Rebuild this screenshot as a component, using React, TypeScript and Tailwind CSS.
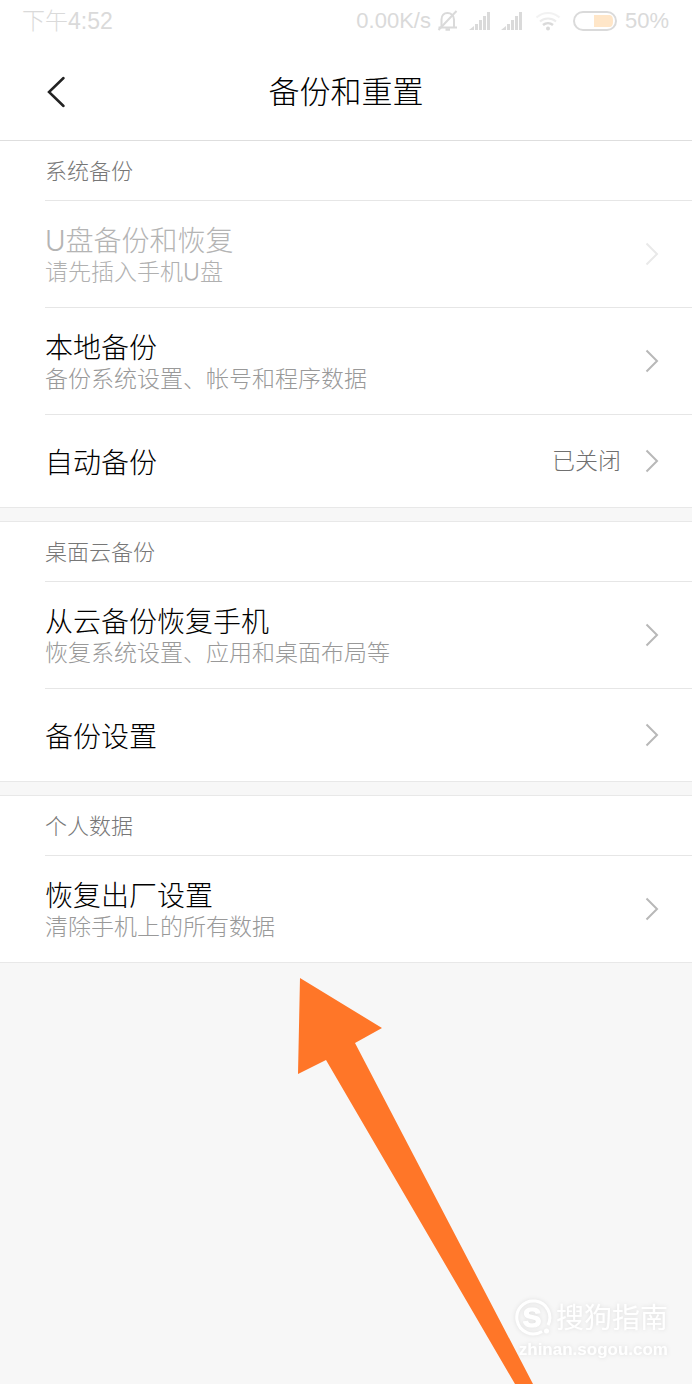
type Item = {
  title: string;
  summary?: string;
  value?: string;
  disabled?: boolean;
};

type Section = {
  label: string;
  items: Item[];
};

const sections: Section[] = [
  {
    label: "系统备份",
    items: [
      { title: "U盘备份和恢复", summary: "请先插入手机U盘", disabled: true },
      { title: "本地备份", summary: "备份系统设置、帐号和程序数据" },
      { title: "自动备份", value: "已关闭" },
    ],
  },
  {
    label: "桌面云备份",
    items: [
      { title: "从云备份恢复手机", summary: "恢复系统设置、应用和桌面布局等" },
      { title: "备份设置" },
    ],
  },
  {
    label: "个人数据",
    items: [{ title: "恢复出厂设置", summary: "清除手机上的所有数据" }],
  },
];

const BellOff = () => (
  <svg viewBox="0 0 22 22" className="h-[22px] w-[22px]" fill="none" stroke="currentColor" strokeWidth="2">
    <path d="M1.500 17.500h18.500M4.500 17.500V9.500c0-4 2.500-6.500 6-6.500s6.500 2.500 6.500 6.500v8" />
    <path d="M19.500 1 1.500 20" />
    <path d="M8.500 19.500h4.500" strokeWidth="2.500" />
  </svg>
);

const Signal = () => (
  <svg viewBox="0 0 22 20" className="h-5 w-[22px]" fill="currentColor">
    <path d="M0 19l5-4v4z" />
    <path d="M6 13h3v6H6zM10 9h3v10h-3zM14 5h3v14h-3zM18 1h3v18h-3z" />
  </svg>
);

const Wifi = () => (
  <svg viewBox="0 0 26 20" className="h-5 w-[26px]" fill="none" stroke="currentColor">
    <path d="M1.500 6.500c6.500-6 16.500-6 23 0" strokeWidth="2" opacity="0.350" />
    <path d="M5 10.500c4.500-4 11.500-4 16 0" strokeWidth="2" opacity="0.500" />
    <path d="M8 14c3-2.500 7-2.500 10 0" strokeWidth="2.500" />
    <circle cx="13" cy="17.500" r="2" fill="currentColor" stroke="none" />
  </svg>
);

const Battery = () => (
  <svg viewBox="0 0 44 20" className="h-5 w-11" fill="none">
    <rect x="1" y="1" width="42" height="18" rx="9" stroke="currentColor" strokeWidth="2" />
    <path d="M21 4h15c3 0 4 2 4 6s-1 6-4 6H21z" fill="#ffe6c8" />
  </svg>
);

const StatusBar = () => (
  <div className="flex h-10 items-center justify-between pt-0.5 pr-[23px] pl-[22px] font-['Liberation_Sans','Noto_Sans_CJK_SC',sans-serif] text-[23px] leading-none text-[#dadada]">
    <span>下午4:52</span>
    <div className="flex items-center text-[22px]">
      <span className="mr-1.5">0.00K/s</span>
      <BellOff />
      <span className="ml-2.5 flex gap-2.5">
        <Signal />
        <Signal />
      </span>
      <span className="mr-3 ml-3">
        <Wifi />
      </span>
      <Battery />
      <span className="ml-2">50%</span>
    </div>
  </div>
);

const Chevron = () => (
  <svg viewBox="0 0 14 24" className="h-6 w-3.5 shrink-0" fill="none" stroke="currentColor" strokeWidth="2">
    <path d="M1.500 1.500 12 12 1.500 22.500" />
  </svg>
);

const Row = ({ item }: { item: Item }) => (
  <button
    type="button"
    disabled={item.disabled}
    className={`flex w-full items-center border-t border-[#e6e6e6] pr-[33px] text-left ${
      item.summary ? "h-[107px]" : "h-[93px]"
    }`}
  >
    <span className="flex min-w-0 flex-1 flex-col pt-1">
      <span className={`text-[28px] leading-8 ${item.disabled ? "text-[#b4b4b4]" : "text-black"}`}>
        {item.title}
      </span>
      {item.summary && (
        <span className={`text-[23px] leading-[30px] ${item.disabled ? "text-[#b0b0b0]" : "text-[#999999]"}`}>
          {item.summary}
        </span>
      )}
    </span>
    {item.value && <span className="mr-6 text-[23px] leading-8 text-[#707070]">{item.value}</span>}
    <span className={item.disabled ? "text-[#e9e9e9]" : "text-[#b8b8b8]"}>
      <Chevron />
    </span>
  </button>
);

const Watermark = () => (
  <div className="relative flex flex-col items-end text-white drop-shadow-[0_0_2px_rgba(0,0,0,0.1)]">
    <div className="flex items-center gap-1">
      <svg viewBox="0 0 38 38" className="h-[38px] w-[38px]" fill="none" stroke="currentColor">
        <path d="M28 32.500A16.500 16.500 0 1 1 34 26" strokeWidth="3" />
        <circle cx="32.500" cy="32" r="2.500" fill="currentColor" stroke="none" />
        <text
          x="18"
          y="28"
          textAnchor="middle"
          className="font-['Liberation_Sans',sans-serif] text-[28px] font-bold"
          fill="currentColor"
          strokeWidth="1"
        >
          S
        </text>
      </svg>
      <span className="text-[28px] leading-10 font-normal">搜狗指南</span>
    </div>
    <span className="font-['Liberation_Sans',sans-serif] text-[17px] leading-6 font-bold">
      zhinan.sogou.com
    </span>
  </div>
);

export default function App() {
  return (
    <div className="flex min-h-screen flex-col bg-[#f7f7f7] font-['Inter','Noto_Sans_CJK_SC',sans-serif] font-light">
      <header className="border-b border-[#dedede] bg-white">
        <StatusBar />
        <div className="grid h-[100px] grid-cols-[1fr_auto_1fr] items-center pt-1 pl-[46px]">
          <button type="button" aria-label="返回" className="w-5 text-[#222222]">
            <svg viewBox="0 0 20 32" className="h-8 w-5" fill="none" stroke="currentColor" strokeWidth="2.500">
              <path d="M17.500 2 3 16l14.500 14" strokeLinecap="round" />
            </svg>
          </button>
          <h1 className="-ml-[46px] text-[31px] leading-10 text-black">备份和重置</h1>
        </div>
      </header>

      <main className="flex flex-col gap-[13px]">
        {sections.map((section, i) => (
          <section
            key={section.label}
            className={`border-b border-[#e8e8e8] bg-white pl-[45px] ${i > 0 ? "border-t" : ""}`}
          >
            <h2 className="flex h-[59px] items-center text-[22px] leading-8 text-[#777777]">
              {section.label}
            </h2>
            {section.items.map((item) => (
              <Row key={item.title} item={item} />
            ))}
          </section>
        ))}
      </main>

      <div className="relative flex min-h-[420px] flex-1 flex-col items-end justify-end overflow-hidden pr-6 pb-[22px]">
        <svg viewBox="0 0 240 406" className="absolute top-[15px] left-[298px] h-[406px] w-60" fill="#ff7628">
          <path d="M2 0 84 50 57 65 235 406H217L28 82 0 96z" />
        </svg>
        <Watermark />
      </div>
    </div>
  );
}
